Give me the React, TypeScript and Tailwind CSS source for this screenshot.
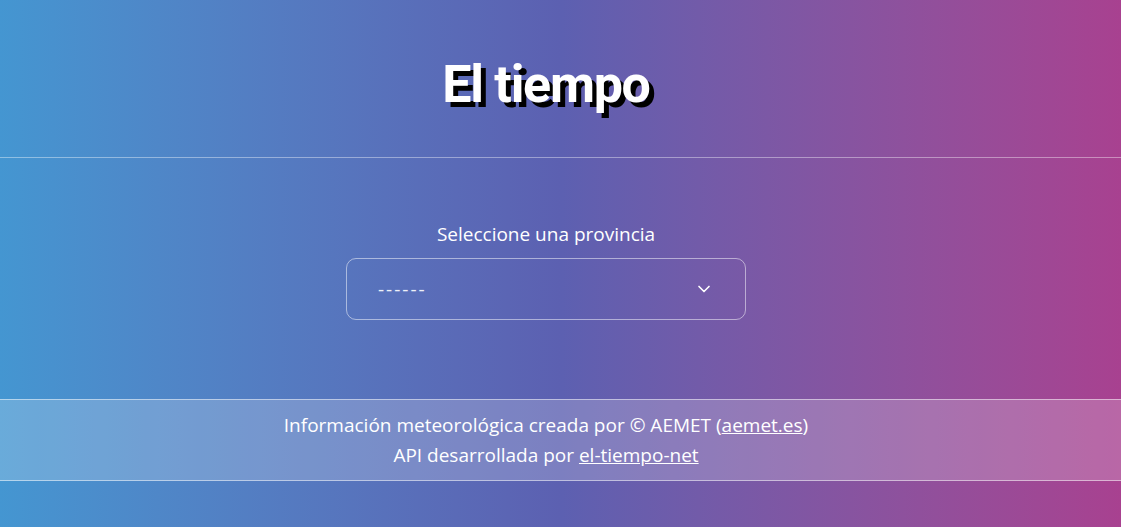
import { ChevronDown } from "lucide-react";

export default function App() {
  return (
    <div
      className="flex h-[527px] w-full flex-col overflow-hidden bg-gradient-to-r from-[#4496d1] via-[#5c60b1] to-[#a84190] text-white"
      style={{ fontFamily: '"Open Sans", "Noto Sans", sans-serif' }}
    >
      {/* Header */}
      <header className="flex h-[158px] shrink-0 items-center justify-center border-b border-white/40 pt-[12px] pr-[29px]">
        <h1
          className="text-[52px] font-bold leading-none tracking-tight [text-shadow:5px_5px_0_#000]"
          style={{ fontFamily: "Roboto, sans-serif" }}
        >
          El tiempo
        </h1>
      </header>

      {/* Selector */}
      <main className="flex h-[241px] shrink-0 flex-col items-center pt-[62px] pr-[29px]">
        <label className="text-[19px] leading-[28px]">Seleccione una provincia</label>
        <div className="mt-[10px] flex h-[62px] w-[400px] items-center justify-between rounded-[10px] border border-white/50 pl-[31px] pr-[31px]">
          <span className="text-[19px] tracking-[2px] text-white/90">------</span>
          <ChevronDown className="h-5 w-5" strokeWidth={2} />
        </div>
      </main>

      {/* Footer */}
      <footer className="flex h-[82px] shrink-0 flex-col items-center justify-center border-y border-white/50 bg-white/20 pr-[29px] text-[19px] leading-[30px]">
        <p>
          Información meteorológica creada por © AEMET (
          <a className="underline" href="#">aemet.es</a>)
        </p>
        <p>
          API desarrollada por <a className="underline" href="#">el-tiempo-net</a>
        </p>
      </footer>
    </div>
  );
}
